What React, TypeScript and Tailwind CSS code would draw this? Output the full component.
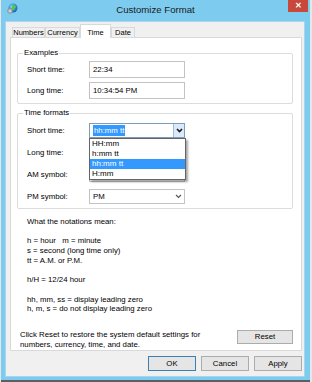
import React from 'react';

// Small globe icon used in the title bar
const GlobeIcon: React.FC = () => (
  <svg width="11" height="11" viewBox="0 0 11 11">
    <defs>
      <radialGradient id="globeFill" cx="0.4" cy="0.35" r="0.7">
        <stop offset="0%" stopColor="#9fe0ff" />
        <stop offset="55%" stopColor="#2a8fd6" />
        <stop offset="100%" stopColor="#1a5fa8" />
      </radialGradient>
    </defs>
    <circle cx="6" cy="5" r="4.5" fill="url(#globeFill)" />
    <path d="M4 2.5 C5 3 5.5 4 4.8 5.2 C4.2 6 5 7 6 7.5 L7.5 6.5 C7 5.5 8 4.5 9 4.8 L8.5 2.5 C7 1.8 5.5 1.8 4 2.5 Z" fill="#5cc24a" />
    <circle cx="3" cy="8" r="2.4" fill="#b8bcc2" stroke="#7d8288" strokeWidth="0.6" />
    <circle cx="3" cy="8" r="0.8" fill="#f0f0f0" />
  </svg>
);

// Small chevron used by the combo boxes
const Chevron: React.FC<{ dark?: boolean }> = ({ dark }) => (
  <svg width="7" height="5" viewBox="0 0 7 5">
    <path d="M1 1 L3.5 3.5 L6 1" fill="none" stroke={dark ? '#1a1a1a' : '#555'} strokeWidth={dark ? 1.6 : 1.1} />
  </svg>
);

interface TabProps {
  label: string;
  width: string;
  active?: boolean;
}

const Tab: React.FC<TabProps> = ({ label, width, active }) => {
  if (active) {
    return (
      <div className={`${width} h-[14px] -mb-[1px] bg-white border border-[#d9d9d9] border-b-0 flex items-start justify-center pt-[2px] text-[7.5px] relative z-10`}>
        {label}
      </div>
    );
  }
  return (
    <div className={`${width} h-[10px] bg-[#f0f0f0] border border-[#d9d9d9] border-b-0 flex items-center justify-center text-[7.5px]`}>
      {label}
    </div>
  );
};

interface FieldProps {
  label: string;
  value: string;
}

// Plain text box row (Examples group)
const TextRow: React.FC<FieldProps> = ({ label, value }) => (
  <div className="flex items-center h-[17px]">
    <div className="w-[62px]">{label}</div>
    <div className="w-[96px] h-[17px] border border-[#c3c3c3] bg-white flex items-center pl-[3px]">{value}</div>
  </div>
);

// Closed combo box row (Time formats group)
const ComboRow: React.FC<FieldProps> = ({ label, value }) => (
  <div className="flex items-center h-[15px]">
    <div className="w-[62px]">{label}</div>
    <div className="relative w-[96px] h-[15px] border border-[#c3c3c3] bg-white flex items-center pl-[3px]">
      <span className="flex-1">{value}</span>
      <span className="w-[11px] flex items-center justify-center">
        <Chevron />
      </span>
    </div>
  </div>
);

const formatOptions = ['HH:mm', 'h:mm tt', 'hh:mm tt', 'H:mm'];
const selectedFormat = 'hh:mm tt';

const notations = [
  'What the notations mean:',
  '',
  'h = hour   m = minute',
  's = second (long time only)',
  'tt = A.M. or P.M.',
  '',
  'h/H = 12/24 hour',
  '',
  'hh, mm, ss = display leading zero',
  'h, m, s = do not display leading zero',
];

const App: React.FC = () => {
  return (
    <div className="w-[312px] h-[382px] bg-[#e4e8ea] font-['Liberation_Sans',Arial,sans-serif] text-[7.8px] text-black overflow-hidden">
      <div className="ml-[1px] w-[309px] h-[380px] bg-[#7dcbef] flex flex-col shadow-[0_2px_0_#5a5f63]">
        {/* Title bar */}
        <div className="relative h-[21px] flex items-center justify-center">
          <div className="absolute left-[6px] top-[3px]">
            <GlobeIcon />
          </div>
          <span className="text-[9.6px] text-[#1b1b1b] -mt-[1px]">Customize Format</span>
          <div className="absolute right-[2px] top-0 w-[20px] h-[12px] bg-[#c8483c] flex items-center justify-center">
            <span className="text-white text-[8px] font-bold leading-none">✕</span>
          </div>
        </div>

        {/* Client area */}
        <div className="ml-[4px] mr-[5px] h-[356px] bg-[#f0f0f0] border border-[#a9d4ec] pl-[4px] flex flex-col">
          {/* Tabs */}
          <div className="pt-[2px] pl-[2px] h-[15px] flex items-end">
            <Tab label="Numbers" width="w-[33px]" />
            <Tab label="Currency" width="w-[35px]" />
            <Tab label="Time" width="w-[31px]" active />
            <Tab label="Date" width="w-[24px]" />
          </div>

          {/* Tab panel */}
          <div className="w-[292px] h-[314px] bg-white border border-[#d9d9d9] pl-[6px] flex flex-col">
            {/* Examples group */}
            <div className="relative mt-[15px] w-[276px] h-[51px] border border-[#dcdcdc] rounded-[2px] pt-[7px] pl-[9px] flex flex-col gap-[4px]">
              <span className="absolute -top-[6px] left-[5px] bg-white px-[1px] leading-[10px]">Examples</span>
              <TextRow label="Short time:" value="22:34" />
              <TextRow label="Long time:" value="10:34:54 PM" />
            </div>

            {/* Time formats group */}
            <div className="relative mt-[9px] w-[276px] h-[96px] border border-[#dcdcdc] rounded-[2px] pt-[9px] pl-[9px] flex flex-col gap-[7px]">
              <span className="absolute -top-[6px] left-[5px] bg-white px-[1px] leading-[10px]">Time formats</span>

              {/* Short time combo, opened */}
              <div className="flex items-center h-[15px]">
                <div className="w-[62px]">Short time:</div>
                <div className="relative w-[96px] h-[15px] border border-[#7f9db9] bg-white flex items-center pl-[3px] z-20">
                  <span className="flex-1">
                    <span className="bg-[#3399ff] text-white px-[1px] py-[1px]">{selectedFormat}</span>
                  </span>
                  <span className="w-[11px] h-full border-l border-[#9fbbd8] bg-[#dbeafa] flex items-center justify-center">
                    <Chevron dark />
                  </span>

                  {/* Drop-down list */}
                  <div className="absolute left-[-1px] top-[14px] w-[97px] bg-white border border-[#646464] shadow-[2px_2px_2px_rgba(0,0,0,0.35)]">
                    {formatOptions.map(opt => (
                      <div
                        key={opt}
                        className={`h-[10px] leading-[10px] pl-[2px] text-[8px] ${opt === selectedFormat ? 'bg-[#3399ff] text-white' : ''}`}
                      >
                        {opt}
                      </div>
                    ))}
                  </div>
                </div>
              </div>

              {/* These two sit under the open list, so their values are not visible */}
              <ComboRow label="Long time:" value="" />
              <ComboRow label="AM symbol:" value="" />
              <ComboRow label="PM symbol:" value="PM" />
            </div>

            {/* Notations */}
            <div className="mt-[8px] pl-[10px] leading-[9.7px]">
              {notations.map((line, i) => (
                <div key={i} className="h-[9.7px] whitespace-pre">{line}</div>
              ))}
            </div>

            {/* Reset row */}
            <div className="mt-[16px] flex items-start pl-[3px] pr-[8px]">
              <div className="flex-1 leading-[9.7px]">
                Click Reset to restore the system default settings for
                <br />
                numbers, currency, time, and date.
              </div>
              <button className="w-[56px] h-[14px] border border-[#acacac] bg-[#e5e5e5] flex items-center justify-center text-[7.8px]">
                Reset
              </button>
            </div>
          </div>

          {/* Dialog buttons */}
          <div className="mt-[5px] w-[292px] flex justify-end gap-[5px]">
            <button className="w-[48px] h-[15px] border border-[#3c7fb1] bg-[#e5e5e5] flex items-center justify-center text-[7.8px]">OK</button>
            <button className="w-[48px] h-[15px] border border-[#acacac] bg-[#e5e5e5] flex items-center justify-center text-[7.8px]">Cancel</button>
            <button className="w-[48px] h-[15px] border border-[#acacac] bg-[#e5e5e5] flex items-center justify-center text-[7.8px]">Apply</button>
          </div>
        </div>
      </div>
    </div>
  );
};

export default App;
